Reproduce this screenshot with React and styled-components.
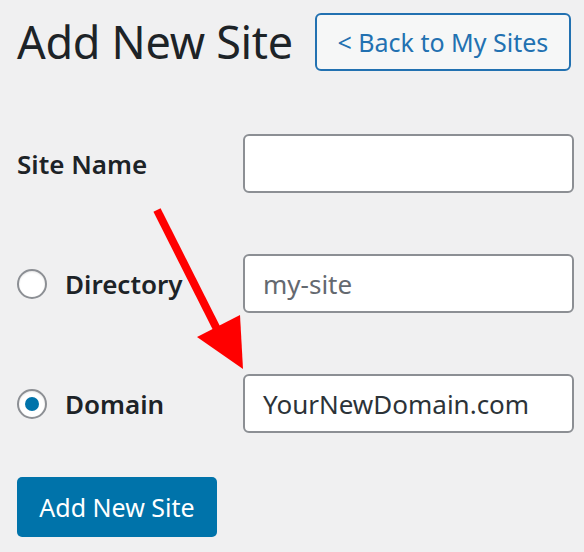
import React from 'react';
import styled, {createGlobalStyle} from 'styled-components';

const Global = createGlobalStyle`
  html, body {
    margin: 0;
    padding: 0;
    background: #f0f0f1;
  }
  body {
    font-family: "Noto Sans", "Open Sans", sans-serif;
    color: #1d2327;
  }
`;

const Page = styled.div`
  position: relative;
  width: 584px;
  height: 552px;
  padding: 13px 0 0 17px;
  box-sizing: border-box;
  overflow: hidden;
`;

const Header = styled.div`
  display: flex;
  align-items: center;
  gap: 22px;
`;

const Title = styled.h1`
  margin: 0;
  font-size: 45px;
  font-weight: 400;
  line-height: 58px;
  color: #1d2327;
  letter-spacing: -0.3px;
`;

const BackButton = styled.a`
  display: flex;
  align-items: center;
  justify-content: center;
  box-sizing: border-box;
  width: 256px;
  height: 58px;
  border: 2px solid #2271b1;
  border-radius: 6px;
  background: #f6f7f7;
  color: #2271b1;
  font-size: 25px;
  text-decoration: none;
`;

const Form = styled.div`
  display: grid;
  grid-template-columns: 226px 331px;
  row-gap: 61px;
  margin-top: 63px;
`;

const Label = styled.label`
  display: flex;
  align-items: center;
  gap: 18px;
  font-size: 26px;
  font-weight: 600;
  color: #1d2327;
`;

const Radio = styled.span`
  display: flex;
  align-items: center;
  justify-content: center;
  width: 30px;
  height: 30px;
  box-sizing: border-box;
  border: 2px solid #8c8f94;
  border-radius: 50%;
  background: #fff;
  box-shadow: inset 0 1px 2px rgba(0,0,0,0.1);

  &::after {
    content: '';
    display: ${p => (p.$checked ? 'block' : 'none')};
    width: 14px;
    height: 14px;
    border-radius: 50%;
    background: #0073aa;
  }
`;

const Input = styled.div`
  display: flex;
  align-items: center;
  box-sizing: border-box;
  height: 59px;
  padding: 0 18px;
  border: 2px solid #8c8f94;
  border-radius: 6px;
  background: #fff;
  font-size: 26px;
  color: ${p => (p.$placeholder ? '#646970' : '#2c3338')};
`;

const Submit = styled.button`
  margin-top: 44px;
  width: 200px;
  height: 60px;
  border: none;
  border-radius: 5px;
  background: #0073aa;
  color: #fff;
  font-family: inherit;
  font-size: 25px;
`;

const Arrow = styled.svg`
  position: absolute;
  left: 0;
  top: 0;
  pointer-events: none;
`;

export default function App() {
    return (
        <Page>
            <Global/>
            <Header>
                <Title>Add New Site</Title>
                <BackButton>&lt; Back to My Sites</BackButton>
            </Header>
            <Form>
                <Label>Site Name</Label>
                <Input/>
                <Label><Radio/>Directory</Label>
                <Input $placeholder>my-site</Input>
                <Label><Radio $checked/>Domain</Label>
                <Input>YourNewDomain.com</Input>
            </Form>
            <Submit>Add New Site</Submit>
            <Arrow width="584" height="552">
                <line x1="157" y1="210" x2="225" y2="345" stroke="#ff0000" strokeWidth="8"/>
                <polygon points="197,337 240,315 243,369" fill="#ff0000"/>
            </Arrow>
        </Page>
    );
}
